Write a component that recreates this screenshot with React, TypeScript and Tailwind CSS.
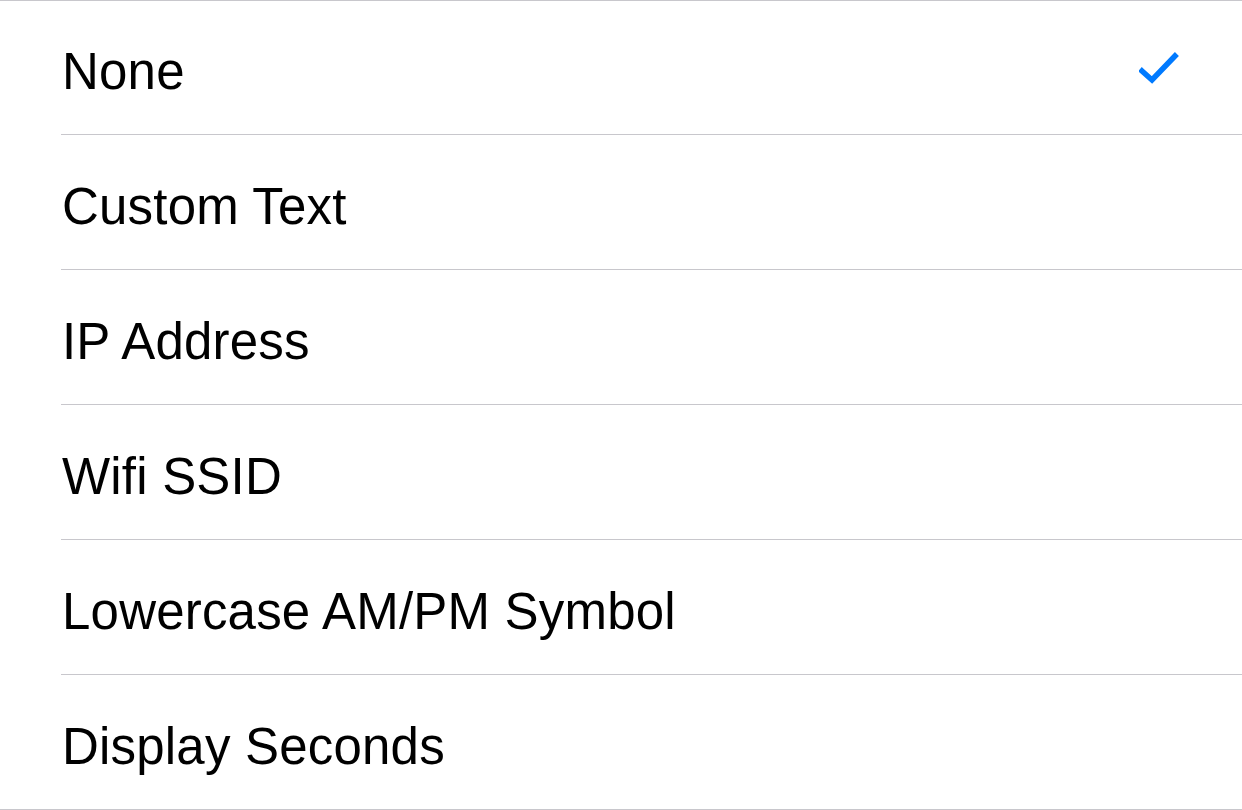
import React from 'react';

const options = ['None', 'Custom Text', 'IP Address', 'Wifi SSID', 'Lowercase AM/PM Symbol', 'Display Seconds'];

function Check(): JSX.Element {
  return (
    <svg width="40" height="32" viewBox="0 0 40 32" fill="none">
      <path d="M3 19 L13 28 L36 4" stroke="#007aff" strokeWidth="5.5" strokeLinecap="square" />
    </svg>
  );
}

export default function App(): JSX.Element {
  return (
    <div className="w-[1242px] h-[810px] bg-white border-t border-b border-[#c8c7cc] font-['Liberation_Sans',Arial,sans-serif] text-black">
      {options.map((label, i) => (
        <div key={label} className="pl-[61px]">
          <div
            className={`flex items-center justify-between pr-[63px] ${i === 0 ? 'h-[134px]' : 'h-[135px]'} ${
              i < options.length - 1 ? 'border-b border-[#c8c7cc]' : ''
            }`}
          >
            <span className="text-[51px] leading-none pt-[8px] pl-px tracking-[0.2px]">{label}</span>
            {i === 0 && <Check />}
          </div>
        </div>
      ))}
    </div>
  );
}
